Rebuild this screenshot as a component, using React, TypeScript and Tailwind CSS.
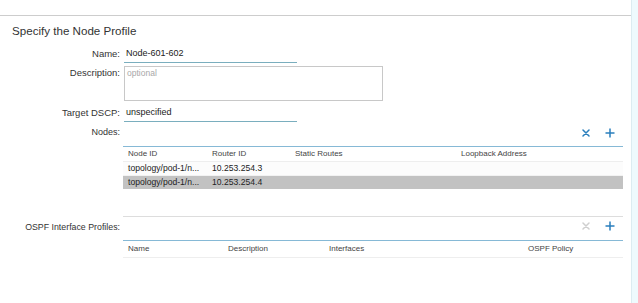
const NODES = [
  { id: "topology/pod-1/n...", router: "10.253.254.3", selected: false },
  { id: "topology/pod-1/n...", router: "10.253.254.4", selected: true },
];

function CloseIcon({ className }: { className: string }) {
  return (
    <svg width="8" height="8" viewBox="0 0 8 8" className={className}>
      <path d="M1 1L7 7M7 1L1 7" stroke="currentColor" strokeWidth="1.5" strokeLinecap="round" />
    </svg>
  );
}

function PlusIcon({ className }: { className: string }) {
  return (
    <svg width="10" height="10" viewBox="0 0 10 10" className={className}>
      <path d="M5 0.5V9.5M0.5 5H9.5" stroke="currentColor" strokeWidth="1.5" />
    </svg>
  );
}

function Label({ children, className = "" }: { children: React.ReactNode; className?: string }) {
  return <div className={`text-right leading-[12px] text-[#333] ${className}`}>{children}</div>;
}

export default function App() {
  return (
    <div className="flex h-[303px] w-[638px] bg-white font-['Liberation_Sans',Arial,sans-serif] text-[#333]">
      <div className="w-[631px]">
        <div className="mt-[15px] border-t border-[#cdcdcd] pr-[8px]">
          <h2 className="ml-[12px] mt-[8px] text-[11.6px] leading-[14px] text-[#333]">Specify the Node Profile</h2>

          <div className="mt-[8px] grid grid-cols-[120px_1fr] gap-x-[3px]">
            {/* Name */}
            <Label className="pt-[2px] text-[9.5px]">Name:</Label>
            <div className="ml-px flex h-[17px] w-[173px] items-center border-b border-[#7aaebe] pl-[2px] text-[9px] text-[#222]">
              Node-601-602
            </div>

            {/* Description */}
            <Label className="mt-[3px] pt-px text-[9.5px]">Description:</Label>
            <div className="ml-px mt-[3px] h-[35px] w-[259px] border border-[#c8c8c8] px-[2px] pt-px text-[8.5px] leading-[11px] text-[#a8a8a8]">
              optional
            </div>

            {/* Target DSCP */}
            <Label className="mt-[4px] pt-[2px] text-[9.5px]">Target DSCP:</Label>
            <div className="ml-px mt-[4px] flex h-[17px] w-[173px] items-center border-b border-[#7aaebe] pl-[2px] text-[9px] text-[#222]">
              unspecified
            </div>

            {/* Nodes */}
            <Label className="mt-[4px] text-[9px]">Nodes:</Label>
            <div className="mt-[4px]">
              <div className="flex h-[20px] items-start justify-end gap-[15px] pr-[8px] pt-[2px]">
                <CloseIcon className="mt-px text-[#2a7fbd]" />
                <PlusIcon className="text-[#2a7fbd]" />
              </div>
              <div className="border-t border-[#86b9d6] text-[8px]">
                <div className="grid h-[15px] grid-cols-[84px_83px_166px_1fr] items-center border-b border-[#eeeeee] text-[#444]">
                  <div className="pl-[5px]">Node ID</div>
                  <div className="pl-[5px]">Router ID</div>
                  <div className="pl-[5px]">Static Routes</div>
                  <div className="pl-[5px]">Loopback Address</div>
                </div>
                {NODES.map((n, i) => (
                  <div
                    key={i}
                    className={`grid grid-cols-[84px_83px_166px_1fr] items-center text-[8.6px] text-[#222] ${
                      n.selected ? "h-[13px] bg-[#c2c2c2]" : "h-[14px] border-b border-[#f2f2f2] bg-[#fcfcfc]"
                    }`}
                  >
                    <div className="pl-[5px]">{n.id}</div>
                    <div className="pl-[5px]">{n.router}</div>
                    <div />
                    <div />
                  </div>
                ))}
              </div>
            </div>

            {/* OSPF Interface Profiles */}
            <Label className="mt-[27px] pt-[5px] text-[8.8px]">OSPF Interface Profiles:</Label>
            <div className="mt-[27px] border-t border-[#dddddd]">
              <div className="flex h-[23px] items-start justify-end gap-[15px] pr-[8px] pt-[4px]">
                <CloseIcon className="mt-px text-[#cfcfcf]" />
                <PlusIcon className="text-[#2a7fbd]" />
              </div>
              <div className="border-t border-[#86b9d6] text-[8px] text-[#444]">
                <div className="grid h-[17px] grid-cols-[100px_101px_199px_1fr] items-center border-b border-[#eeeeee]">
                  <div className="pl-[5px]">Name</div>
                  <div className="pl-[5px]">Description</div>
                  <div className="pl-[5px]">Interfaces</div>
                  <div className="pl-[5px]">OSPF Policy</div>
                </div>
              </div>
            </div>
          </div>
        </div>
      </div>
      <div className="w-[7px] border-l border-[#dcecf1] bg-[#eefafd]" />
    </div>
  );
}
